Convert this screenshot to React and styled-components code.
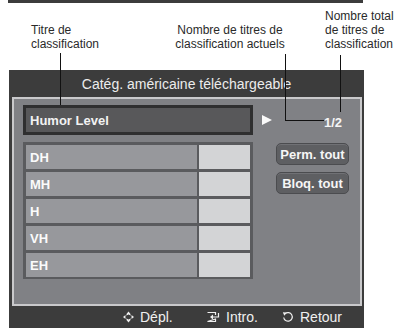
import React from "react";
import styled, { createGlobalStyle } from "styled-components";

const Global = createGlobalStyle`
  html, body { margin: 0; padding: 0; background: #fff; }
  body { font-family: "Liberation Sans", Arial, sans-serif; }
`;

const Page = styled.div`
  position: relative;
  width: 397px;
  height: 328px;
  overflow: hidden;
  background: #fff;
  font-family: "Liberation Sans", Arial, sans-serif;
`;

const TopStrip = styled.div`
  margin-left: 8px;
  width: 355px;
  height: 3px;
  background: #3c3c3c;
`;

const Annotations = styled.div`
  height: 67px;
  box-sizing: border-box;
  display: grid;
  grid-template-columns: 141px 153px 1fr;
  align-items: end;
  padding: 0 0 19px 31px;
`;

const Label = styled.div`
  font-size: 12px;
  line-height: 14px;
  color: #2a2a2a;
  text-align: ${(p) => p.$align || "left"};
  width: ${(p) => p.$w || "auto"};
`;

const Leader = styled.div`
  position: absolute;
  background: #111;
  left: ${(p) => p.$x}px;
  top: ${(p) => p.$y}px;
  width: ${(p) => p.$w}px;
  height: ${(p) => p.$h}px;
`;

const Panel = styled.div`
  margin-left: 9px;
  width: 355px;
  height: 258px;
  background: #3c3c3c;
  display: flex;
  flex-direction: column;
`;

const Title = styled.div`
  height: 27px;
  display: flex;
  align-items: center;
  justify-content: center;
  color: #ececec;
  font-size: 14px;
`;

const Inner = styled.div`
  margin: 0 2px 0 3px;
  height: 209px;
  box-sizing: border-box;
  border: 2px solid #c9c9cb;
  background: #808185;
  padding: 6px 0 0 9px;
  display: flex;
  flex-direction: column;
  gap: 7px;
`;

const HeadRow = styled.div`
  display: flex;
  align-items: center;
  height: 30px;
`;

const TitleBox = styled.div`
  width: 230px;
  height: 30px;
  box-sizing: border-box;
  border: 3px solid #2f2f30;
  background: #58585a;
  color: #f2f2f2;
  font-weight: bold;
  font-size: 13px;
  display: flex;
  align-items: center;
  padding-left: 4px;
`;

const Arrow = styled.div`
  margin-left: 9px;
  width: 0;
  height: 0;
  border-top: 5px solid transparent;
  border-bottom: 5px solid transparent;
  border-left: 10px solid #fafafa;
`;

const Count = styled.div`
  margin-left: 52px;
  margin-top: 4px;
  color: #f5f5f5;
  font-weight: bold;
  font-size: 13px;
`;

const BodyRow = styled.div`
  display: flex;
  align-items: flex-start;
  gap: 23px;
`;

const List = styled.div`
  width: 230px;
  box-sizing: border-box;
  background: #5a5b5e;
  padding: 3px 3px 2px 3px;
  display: flex;
  flex-direction: column;
  gap: 3px;
`;

const Row = styled.div`
  display: flex;
  height: 24px;
  gap: 2px;
`;

const NameCell = styled.div`
  flex: 1;
  background: #97989c;
  color: #fbfbfb;
  font-weight: bold;
  font-size: 13px;
  display: flex;
  align-items: center;
  padding-left: 4px;
`;

const ValueCell = styled.div`
  width: 51px;
  background: #d3d4d6;
`;

const Buttons = styled.div`
  display: flex;
  flex-direction: column;
  gap: 7px;
  margin-top: 1px;
`;

const Button = styled.div`
  width: 73px;
  height: 22px;
  box-sizing: border-box;
  border-radius: 5px;
  background: #5e5f62;
  border: 1px solid #4b4c4f;
  box-shadow: inset 0 1px 0 #707175;
  color: #f6f6f6;
  font-weight: bold;
  font-size: 13px;
  display: flex;
  align-items: center;
  justify-content: center;
`;

const Footer = styled.div`
  height: 22px;
  display: grid;
  grid-template-columns: 84px 75px auto;
  padding-left: 114px;
  align-items: center;
`;

const FootItem = styled.div`
  display: flex;
  align-items: center;
  gap: 6px;
  color: #f0f0f0;
  font-size: 14px;
  svg { flex: none; }
`;

const MoveIcon = () => (
  <svg width="11" height="12" viewBox="0 0 11 12">
    <path d="M5.5 0.5 L7.5 3 L3.5 3 Z M5.5 11.5 L7.5 9 L3.5 9 Z M0 6 L2.5 4 L2.5 8 Z M11 6 L8.5 4 L8.5 8 Z" fill="#f0f0f0" />
    <path d="M3.2 4 Q5.5 2.4 7.8 4 M3.2 8 Q5.5 9.6 7.8 8" stroke="#f0f0f0" strokeWidth="1" fill="none" />
  </svg>
);

const EnterIcon = () => (
  <svg width="13" height="12" viewBox="0 0 13 12">
    <path d="M0.5 1.5 H8.5 V4 M8.5 8 V10.5 H0.5 Z" stroke="#f0f0f0" strokeWidth="1.2" fill="none" />
    <path d="M11.5 2 V6 H5" stroke="#f0f0f0" strokeWidth="1.2" fill="none" />
    <path d="M3 6 L6 3.5 L6 8.5 Z" fill="#f0f0f0" />
  </svg>
);

const ReturnIcon = () => (
  <svg width="12" height="12" viewBox="0 0 12 12">
    <path d="M3.2 2.6 A4.3 4.3 0 1 1 1.7 6.5" stroke="#f0f0f0" strokeWidth="1.2" fill="none" />
    <path d="M0.8 1.2 L4.8 1.6 L2.4 4.8 Z" fill="#f0f0f0" />
  </svg>
);

const rows = ["DH", "MH", "H", "VH", "EH"];

export default function App() {
  return (
    <Page>
      <Global />
      <TopStrip />
      <Annotations>
        <Label>Titre de<br />classification</Label>
        <Label $align="center" $w="116px">Nombre de titres de<br />classification actuels</Label>
        <Label>Nombre total<br />de titres de<br />classification</Label>
      </Annotations>
      <Panel>
        <Title>Catég. américaine téléchargeable</Title>
        <Inner>
          <HeadRow>
            <TitleBox>Humor Level</TitleBox>
            <Arrow />
            <Count>1/2</Count>
          </HeadRow>
          <BodyRow>
            <List>
              {rows.map((r) => (
                <Row key={r}>
                  <NameCell>{r}</NameCell>
                  <ValueCell />
                </Row>
              ))}
            </List>
            <Buttons>
              <Button>Perm. tout</Button>
              <Button>Bloq. tout</Button>
            </Buttons>
          </BodyRow>
        </Inner>
        <Footer>
          <FootItem><MoveIcon />Dépl.</FootItem>
          <FootItem><EnterIcon />Intro.</FootItem>
          <FootItem><ReturnIcon />Retour</FootItem>
        </Footer>
      </Panel>
      <Leader $x={60} $y={53} $w={1} $h={52} />
      <Leader $x={285} $y={54} $w={1} $h={67} />
      <Leader $x={285} $y={120} $w={39} $h={1} />
      <Leader $x={340} $y={55} $w={1} $h={57} />
    </Page>
  );
}
